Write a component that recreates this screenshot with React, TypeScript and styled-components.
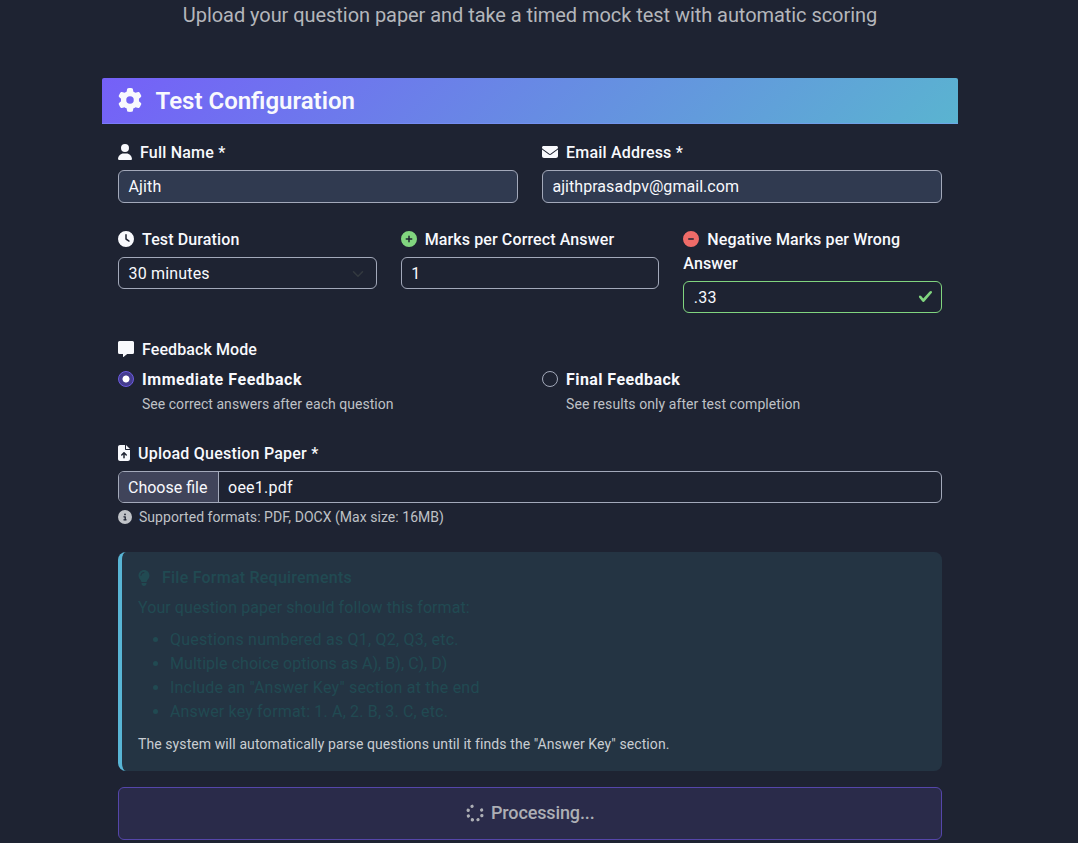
import React from 'react';
import styled, { createGlobalStyle } from 'styled-components';
import {
  FaGear, FaUser, FaEnvelope, FaClock, FaCirclePlus, FaCircleMinus,
  FaFileArrowUp, FaCircleInfo, FaLightbulb, FaSpinner,
} from 'react-icons/fa6';

const GlobalStyle = createGlobalStyle`
  *, *::before, *::after { box-sizing: border-box; }
  html { background: #1e2332; overflow: hidden; }
  body {
    margin: 0;
    height: 843px;
    overflow: hidden;
    background: #1e2332;
    color: #f8f9fd;
    font: 400 16px/24px Roboto, "Liberation Sans", sans-serif;
  }
`;

const Page = styled.main`
  width: 856px;
  margin-left: 102px;
  display: flex;
  flex-direction: column;
`;

const Lead = styled.p`
  margin: 0 0 48px;
  height: 30px;
  line-height: 30px;
  font-size: 20px;
  font-weight: 400;
  letter-spacing: -0.056px;
  text-align: center;
  color: #b4b6bb;
  white-space: nowrap;
`;

const Card = styled.section`
  border-radius: 2px;
  overflow: hidden;
`;

const CardHeader = styled.header`
  height: 46px;
  padding: 0 16px;
  display: flex;
  align-items: center;
  background: linear-gradient(135deg, #7560f8, #5ab4d0);
  box-shadow: inset 0 -1px 0 rgba(130, 150, 255, 0.45);

  svg { width: 24px; height: 24px; margin: -2px 13.5px 0 0; }
`;

const Title = styled.h4`
  margin: 0;
  font-size: 24px;
  line-height: 29px;
  font-weight: 600;
`;

const Form = styled.form`
  display: flex;
  flex-direction: column;
  padding: 17px 16px 16px;
`;

const Row = styled.div<{ $cols: number; $gap: number }>`
  display: grid;
  grid-template-columns: repeat(${(p) => p.$cols}, minmax(0, 1fr));
  column-gap: 24px;
  align-items: start;
  margin-bottom: ${(p) => p.$gap}px;
`;

const Label = styled.label<{ $ls: number; $tint?: string; $icon?: number }>`
  display: block;
  margin-bottom: 5px;
  font-weight: 500;
  line-height: 24px;
  letter-spacing: ${(p) => p.$ls}px;

  svg {
    height: 16px;
    width: ${(p) => p.$icon ?? 16}px;
    margin-right: 8px;
    vertical-align: -2px;
    color: ${(p) => p.$tint ?? 'inherit'};
  }
`;

const Control = styled.div<{ $filled?: boolean; $valid?: boolean; $ls: number }>`
  display: flex;
  align-items: center;
  justify-content: space-between;
  height: ${(p) => (p.$filled ? 33 : 32)}px;
  padding: ${(p) => (p.$filled ? 0 : 1)}px ${(p) => (p.$valid ? 8 : 12)}px 0 9.5px;
  border: 1px solid ${(p) => (p.$valid ? '#81d57f' : '#a3a9ba')};
  border-radius: 6px;
  background: ${(p) => (p.$filled ? '#303a50' : 'transparent')};
  letter-spacing: ${(p) => p.$ls}px;
`;

const Radio = styled.div<{ $checked?: boolean }>`
  flex: none;
  width: 16px;
  height: 16px;
  margin-top: 4px;
  border: 1px solid ${(p) => (p.$checked ? '#6d5be3' : '#a3a9ba')};
  border-radius: 50%;
  background: ${(p) => (p.$checked ? 'radial-gradient(circle, #fff 0 3.1px, #443c8e 3.9px)' : 'transparent')};
`;

const Choice = styled.div`
  display: flex;
  gap: 8px;
`;

const ChoiceText = styled.div`
  padding-top: 1px;
`;

const ChoiceName = styled.strong<{ $ls: number }>`
  display: block;
  font-weight: 700;
  letter-spacing: ${(p) => p.$ls}px;
`;

const Small = styled.small<{ $ls: number; $color?: string }>`
  display: block;
  font-size: 14px;
  line-height: 21px;
  letter-spacing: ${(p) => p.$ls}px;
  color: ${(p) => p.$color ?? '#bfc1c6'};
`;

const ChoiceNote = styled(Small)`
  margin-top: 2px;
`;

const FileField = styled.div`
  display: flex;
  height: 32px;
  border: 1px solid #a3a9ba;
  border-radius: 6px;
  overflow: hidden;
  line-height: 31px;
`;

const FileButton = styled.span`
  width: 100px;
  padding-left: 9px;
  background: #40445a;
  border-right: 1px solid #a3a9ba;
`;

const FileName = styled.span`
  padding-left: 9px;
  letter-spacing: 0.25px;
`;

const Hint = styled(Small)`
  display: flex;
  align-items: center;
  margin-top: 4px;

  svg { width: 14px; height: 14px; margin: -2px 7px 0 0; color: #c0c3c8; }
`;

const Notice = styled.aside`
  height: 219px;
  margin: 24px 0 16px;
  padding: 14px 16px;
  border-left: 4px solid #58b5d5;
  border-radius: 8px;
  background: #243443;
  color: #214a52;
`;

const NoticeTitle = styled.h6`
  display: flex;
  align-items: center;
  margin: 0 0 6px;
  font-size: 16px;
  line-height: 24px;
  font-weight: 500;
  letter-spacing: 0.229px;

  svg { height: 16px; width: 12px; margin-right: 12px; }
`;

const NoticeText = styled.p`
  margin: 0 0 8px;
  letter-spacing: 0.075px;
`;

const Rules = styled.ul`
  margin: 0 0 10px;
  padding-left: 32px;
`;

const Rule = styled.li<{ $ls: number }>`
  letter-spacing: ${(p) => p.$ls}px;
`;

const Submit = styled.button`
  display: flex;
  align-items: center;
  justify-content: center;
  height: 53px;
  padding: 0 0 2px;
  border: 1px solid #5546aa;
  border-radius: 6px;
  background: #2a2b4a;
  color: #adafb5;
  font: 500 18px/27px Roboto, "Liberation Sans", sans-serif;
  letter-spacing: -0.132px;

  svg { width: 18px; height: 18px; margin-right: 7.5px; transform: rotate(-24deg); }
`;

const MessageIcon = () => (
  <svg viewBox="0 0 16 16" fill="currentColor">
    <path d="M1.5 0h13A1.5 1.5 0 0 1 16 1.5v10a1.5 1.5 0 0 1-1.5 1.5H9.2L5.8 15.7a.4.4 0 0 1-.8-.3V13H1.5A1.5 1.5 0 0 1 0 11.5v-10A1.5 1.5 0 0 1 1.5 0Z" />
  </svg>
);

const Chevron = () => (
  <svg width="12" height="12" viewBox="0 0 16 16" fill="none" stroke="#343a40" strokeWidth="2" strokeLinecap="round" strokeLinejoin="round">
    <path d="m2 5 6 6 6-6" />
  </svg>
);

const CheckMark = styled.svg`
  width: 15px;
  height: 15px;
  margin-bottom: 2px;
  fill: #81d57f;
`;

const rules = [
  { text: 'Questions numbered as Q1, Q2, Q3, etc.', ls: 0.22 },
  { text: 'Multiple choice options as A), B), C), D)', ls: 0.054 },
  { text: 'Include an "Answer Key" section at the end', ls: 0.21 },
  { text: 'Answer key format: 1. A, 2. B, 3. C, etc.', ls: 0.165 },
];

export default function App() {
  return (
    <>
      <GlobalStyle />
      <Page>
        <Lead>Upload your question paper and take a timed mock test with automatic scoring</Lead>
        <Card>
          <CardHeader>
            <FaGear />
            <Title>Test Configuration</Title>
          </CardHeader>
          <Form>
            <Row $cols={2} $gap={25}>
              <div>
                <Label $icon={14} $ls={0.207}><FaUser />Full Name *</Label>
                <Control $filled $ls={0.15}>Ajith</Control>
              </div>
              <div>
                <Label $ls={0.201}><FaEnvelope />Email Address *</Label>
                <Control $filled $ls={0.043}>ajithprasadpv@gmail.com</Control>
              </div>
            </Row>
            <Row $cols={3} $gap={25}>
              <div>
                <Label $ls={0.127}><FaClock />Test Duration</Label>
                <Control $ls={0.17}>30 minutes<Chevron /></Control>
              </div>
              <div>
                <Label $ls={0.119} $tint="#81d57f"><FaCirclePlus />Marks per Correct Answer</Label>
                <Control $ls={0}>1</Control>
              </div>
              <div>
                <Label $ls={0.13} $tint="#ef6b68"><FaCircleMinus />Negative Marks per Wrong Answer</Label>
                <Control $valid $ls={0.266}>
                  .33
                  <CheckMark viewBox="0 0 8 8">
                    <path d="M2.3 6.73.6 4.53c-.4-1.04.46-1.4 1.1-.8l1.1 1.4 3.4-3.8c.6-.63 1.6-.27 1.2.7l-4 4.6c-.43.5-.8.4-1.1.1z" />
                  </CheckMark>
                </Control>
              </div>
            </Row>
            <Label $ls={0.096}><MessageIcon />Feedback Mode</Label>
            <Row $cols={2} $gap={27}>
              <Choice>
                <Radio $checked />
                <ChoiceText>
                  <ChoiceName $ls={0.543}>Immediate Feedback</ChoiceName>
                  <ChoiceNote $ls={0.03}>See correct answers after each question</ChoiceNote>
                </ChoiceText>
              </Choice>
              <Choice>
                <Radio />
                <ChoiceText>
                  <ChoiceName $ls={0.43}>Final Feedback</ChoiceName>
                  <ChoiceNote $ls={0.075}>See results only after test completion</ChoiceNote>
                </ChoiceText>
              </Choice>
            </Row>
            <Label $icon={12} $ls={0.223}><FaFileArrowUp />Upload Question Paper *</Label>
            <FileField>
              <FileButton>Choose file</FileButton>
              <FileName>oee1.pdf</FileName>
            </FileField>
            <Hint $ls={0.038}><FaCircleInfo />Supported formats: PDF, DOCX (Max size: 16MB)</Hint>
            <Notice>
              <NoticeTitle><FaLightbulb />File Format Requirements</NoticeTitle>
              <NoticeText>Your question paper should follow this format:</NoticeText>
              <Rules>
                {rules.map((r) => <Rule key={r.text} $ls={r.ls}>{r.text}</Rule>)}
              </Rules>
              <Small $ls={0.087} $color="#c9cdd2">
                The system will automatically parse questions until it finds the "Answer Key" section.
              </Small>
            </Notice>
            <Submit type="button"><FaSpinner />Processing...</Submit>
          </Form>
        </Card>
      </Page>
    </>
  );
}
